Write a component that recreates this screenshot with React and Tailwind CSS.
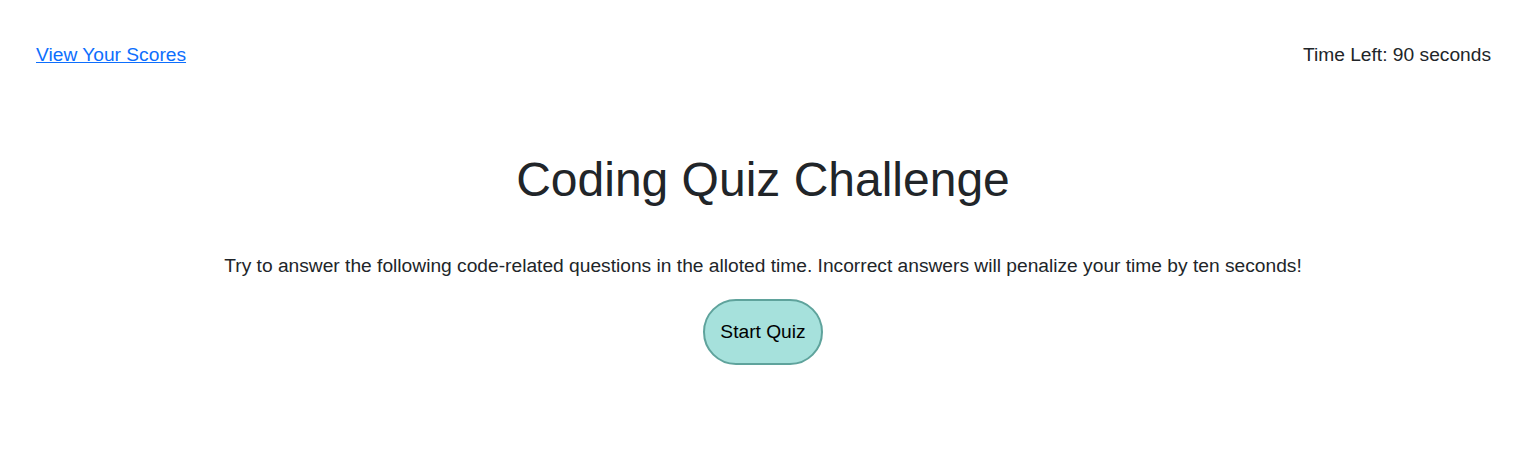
export default function App() {
  return (
    <div className="min-h-[469px] bg-white text-[#212529]" style={{ fontFamily: '"Liberation Sans", Arial, sans-serif' }}>
      <header className="flex items-center justify-between pl-[36px] pr-[48px] pt-[43px]">
        <a href="#" className="text-[19.2px] leading-[24px] text-[#0d6efd] underline">View Your Scores</a>
        <div className="text-[19.2px] leading-[24px]">Time Left: 90 seconds</div>
      </header>
      <main className="flex flex-col items-center pr-[13px]">
        <h1 className="mt-[84px] text-[48px] leading-[58px] font-normal">Coding Quiz Challenge</h1>
        <p className="mt-[45px] text-[19.2px] leading-[24px]">Try to answer the following code-related questions in the alloted time. Incorrect answers will penalize your time by ten seconds!</p>
        <button className="mt-[21px] flex h-[66px] w-[120px] items-center justify-center rounded-full border-2 border-[#5fa39c] bg-[#a6e1dc] text-[19.2px] text-black">Start Quiz</button>
      </main>
    </div>
  );
}
